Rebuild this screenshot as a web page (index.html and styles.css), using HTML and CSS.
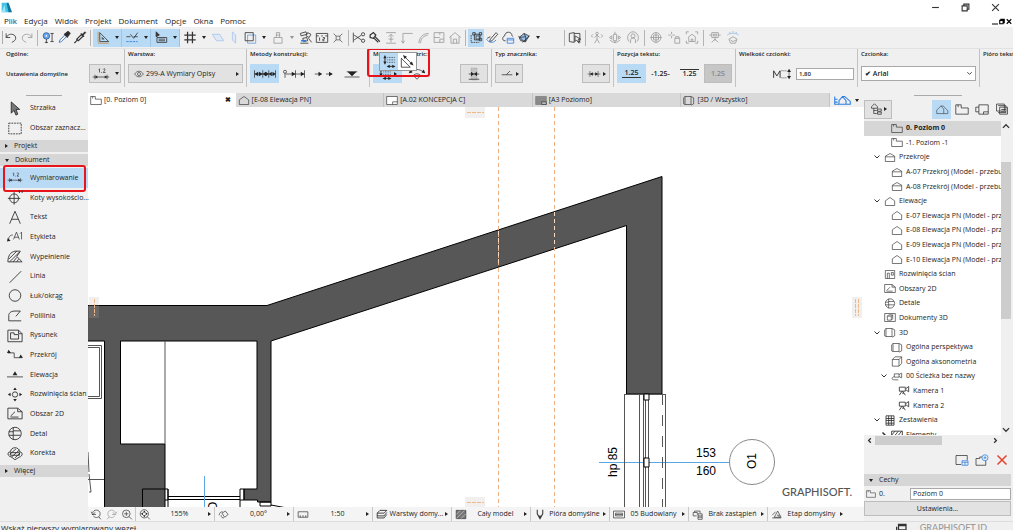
FILE: index.html
```html
<!DOCTYPE html>
<html lang="pl">
<head>
    <meta charset="UTF-8">
    <title>Poziom 0</title>
    <link rel="stylesheet" href="styles.css">
</head>
<body>
    <!-- shared icon shapes, all drawn on a 16px grid -->
    <svg class="symbols" aria-hidden="true">
        <symbol id="undo" viewBox="0 0 16 16"><path d="M2 3v5h5M2 8c3-5 8-5 11-2 2 4 0 6-4 8"/></symbol>
        <symbol id="redo" viewBox="0 0 16 16"><path d="M14 3v5H9M14 8c-3-5-8-5-11-2-2 4 0 6 4 8"/></symbol>
        <symbol id="find" viewBox="0 0 16 16"><circle cx="6" cy="6" r="4" fill="#6aa5e8" stroke="#2d5f9a"/><circle cx="6" cy="6" r="1" fill="#fff" stroke="none"/><path d="M6 10v5M4 14h4M11 3h4M13 3v10M11 13h4"/></symbol>
        <symbol id="dropper" viewBox="0 0 16 16"><path d="M2 14l1-3 6-6 2 2-6 6z" stroke="#2d6fc0"/><path d="M9 4l3 3 3-4-2-2z" fill="#223" stroke-width="2"/></symbol>
        <symbol id="syringe" viewBox="0 0 16 16"><path d="M1 15l4-4M4 10l6-6 2 2-6 6zM9 3l4 4" stroke-width="1.5"/><path d="M10 5l4-4 1 1-4 4z" fill="#223"/></symbol>
        <symbol id="setsquare" viewBox="0 0 16 16"><path d="M4 2v11h11zM7 8v2h2z"/><path d="M2 1v13M2 15h13" stroke="#c58a3c"/></symbol>
        <symbol id="guide" viewBox="0 0 16 16"><path d="M1 7h5M10 7h5M6 4l4 5 5-7"/><path d="M1 13h14" stroke="#2d7de0" stroke-dasharray="3 1"/></symbol>
        <symbol id="tracker" viewBox="0 0 16 16"><path d="M2 1v6l4-2z" fill="#333"/><path d="M3 8v6h12V8zM5 10h8M5 12h8"/></symbol>
        <symbol id="hash" viewBox="0 0 16 16"><path d="M5 1v14M11 1v14M1 5h14M1 11h14" stroke-width="1.5"/></symbol>
        <symbol id="planeh" viewBox="0 0 16 16"><path d="M1 4h9l5 8H6z" fill="#dfe9f8" stroke="#a9c3e8"/></symbol>
        <symbol id="planev" viewBox="0 0 16 16"><path d="M6 1l4 4v10l-4-4z" fill="#dfe9f8" stroke="#a9c3e8"/></symbol>
        <symbol id="frames" viewBox="0 0 16 16"><path d="M5 5h10v10H5z" stroke="#6a9be0"/><path d="M2 2h10v10H2z"/></symbol>
        <symbol id="lock" viewBox="0 0 16 16"><path d="M3 8h10v7H3zM6 8V5h4v3M6 5V2h4v3"/></symbol>
        <symbol id="groups" viewBox="0 0 16 16"><path d="M1 3l7-2 1 3-7 2zM10 2l4 2-2 4-4-2zM4 9l5-1 1 4-5 1zM1 15h10M11 9l4 5"/><path d="M2 12h6" stroke="#2d7de0" stroke-width="2"/></symbol>
        <symbol id="ruler12" viewBox="0 0 16 16"><path d="M1 3h14v11H1zM1 6h3M7 6h2M12 6h3M5 8v4M9 8h2v2H9v2h2"/></symbol>
        <symbol id="explode" viewBox="0 0 16 16"><path d="M5 5h6v6H5zM1 1l4 4M15 1l-4 4M1 15l4-4M15 15l-4-4"/></symbol>
        <symbol id="trim" viewBox="0 0 16 16"><path d="M1 2v12M2 5l9 6M2 11l9-6"/><circle cx="13" cy="4" r="2"/><circle cx="13" cy="12" r="2"/></symbol>
        <symbol id="wrench" viewBox="0 0 16 16"><path d="M2 5l4-3 3 3-3 4-4-1zM8 7l6 6M7 9l5 5" stroke-width="1.5"/></symbol>
        <symbol id="level" viewBox="0 0 16 16"><path d="M2 2h12M8 4v10M5 7l3-3 3 3M2 15h12M5 10h6"/></symbol>
        <symbol id="corner" viewBox="0 0 16 16"><path d="M3 15V3h12M1 12l2 3 2-3"/></symbol>
        <symbol id="arc" viewBox="0 0 16 16"><path d="M3 15C3 8 8 3 15 3M5 15c0-6 4-9 9-10"/></symbol>
        <symbol id="plan" viewBox="0 0 16 16"><path d="M2 2h12v12H2zM2 8h7M9 2v3M9 10v4M9 10h5"/></symbol>
        <symbol id="home" viewBox="0 0 16 16"><path d="M1 8l7-6 7 6M3 7v8h10V7M6 15v-5h4v5"/></symbol>
        <symbol id="marquee" viewBox="0 0 16 16"><path d="M6 4h7v7H6zM4 2h3v3H4zM12 2h3v3h-3zM12 9h3v3h-3z"/><path d="M2 5v9h10" stroke-dasharray="2 1"/><path d="M8 6h4v4H8z"/></symbol>
        <symbol id="pens" viewBox="0 0 16 16"><path d="M6 10l7-8 2 2-7 8-3 1z"/><path d="M1 10c3 4 8 6 12 1" stroke="#2d7de0"/><path d="M2 9l4-2"/></symbol>
        <symbol id="cloudwin" viewBox="0 0 16 16"><path d="M5 12H3c-3-2-1-6 1-6 0-6 9-6 9 0l1 1"/><path d="M7 9h8v6H7zM7 11h8" stroke="#2d7de0"/></symbol>
        <symbol id="cube" viewBox="0 0 16 16"><path d="M2 8l6-5 6 3-4 7-6-1z" fill="#9ac4f0"/><path d="M1 6l8 8M6 14l9-8M8 3l2 4-8 1M10 7v6"/></symbol>
        <symbol id="cursorwin" viewBox="0 0 16 16"><path d="M1 3l6-1v12l-6-1zM7 3h7v10h-3M8 6v7l2-2 3 4 1-1-2-4h3z"/></symbol>
        <symbol id="walk" viewBox="0 0 16 16"><circle cx="8" cy="3" r="1.5"/><path d="M8 5v5l-3 5M8 10l3 5M5 8l3-3 3 3M3 4l-2 2 2 2M13 4l2 2-2 2"/></symbol>
        <symbol id="orbit" viewBox="0 0 16 16"><path d="M6 4h4v8H6zM1 8l3-2v4zM15 8l-3-2v4zM8 1v3M8 12v3M2 11c3 4 9 4 12 0"/></symbol>
        <symbol id="headset" viewBox="0 0 16 16"><path d="M3 13C-1 8 3 1 8 1s9 7 5 12"/><circle cx="8" cy="6" r="2.500"/><path d="M5 15v-4c0-3 6-3 6 0v4"/></symbol>
        <symbol id="globe" viewBox="0 0 16 16"><circle cx="8" cy="8" r="6"/><path d="M5 5h6v6H5zM8 1v14M1 8h14"/></symbol>
        <symbol id="sparklock" viewBox="0 0 16 16"><path d="M5 1v3M5 6v3M1 5h3M6 5h3M9 9h6v6H9zM10 9V7h4v2"/></symbol>
        <symbol id="homeframe" viewBox="0 0 16 16"><path d="M1 4V1h3M12 1h3v3M15 12v3h-3M4 15H1v-3M3 8l5-4 5 4M4 8v5h8V8M7 13v-3h2v3"/></symbol>
        <symbol id="robot" viewBox="0 0 16 16"><path d="M4 2h8v6H4zM1 5h3M12 5h3M8 8v4M4 14l4-4 4 4M6 4h4v2H6z"/></symbol>
        <symbol id="sun" viewBox="0 0 16 16"><path d="M3 10l5-3 5 3-2 5H5zM5 11l3 2 4-2"/><path d="M1 5c4-3 10-3 14 0M4 1v2M8 0v2M12 1v2" stroke="#2d7de0"/></symbol>
        <symbol id="dim" viewBox="0 0 24 16"><path d="M1 12h22M4 9v6M20 9v6M9 2l1-1v5M12 6h1M15 2c1-2 3-1 2 1l-2 3h3"/><path d="M4 12l3-2v4zM20 12l-3-2v4z" fill="#222" stroke="none"/></symbol>
        <symbol id="eye" viewBox="0 0 16 16"><path d="M1 8c4-6 10-6 14 0-4 6-10 6-14 0z"/><circle cx="8" cy="8" r="2.500"/></symbol>
        <symbol id="chain" viewBox="0 0 32 16"><path d="M2 3v10M13 3v10M21 3v10M30 3v10M2 8h28"/><path d="M2 8l5-3v6zM13 8L8 5v6zM13 8l4-3v6zM21 8l-4-3v6zM21 8l4-3v6zM30 8l-4-3v6z" fill="#222" stroke="none"/></symbol>
        <symbol id="chainbase" viewBox="0 0 32 16"><circle cx="4" cy="5" r="2"/><path d="M4 7v6M5 8h25M18 3v10M30 3v10"/><path d="M18 8l-5-3v6zM30 8l-5-3v6z" fill="#222" stroke="none"/></symbol>
        <symbol id="arrows" viewBox="0 0 32 16"><path d="M5 8h8M20 8h8"/><path d="M15 8l-5-3v6zM29 8l-5-3v6z" fill="#222" stroke="none"/></symbol>
        <symbol id="elevdim" viewBox="0 0 24 16"><path d="M2 12h20M5 5h14"/><path d="M6 5h12l-6 6z" fill="#222" stroke="none"/></symbol>
        <symbol id="ortho" viewBox="0 0 16 16"><path d="M3 3v7M7 14h6M6 3h9M6 6h9M6 9h9" stroke-dasharray="1 1"/><path d="M3 3v7M7 14h6"/><path d="M3 0l2 4H1zM3 12l2-4H1zM5 14l4-2v4zM16 14l-4-2v4z" fill="#222" stroke="none"/></symbol>
        <symbol id="slant" viewBox="0 0 16 16"><path d="M1 4v11h11zM5 2l9 9"/><path d="M3 0l5 2-3 3zM16 13l-2-5-3 3z" fill="#222" stroke="none"/></symbol>
        <symbol id="arcdim" viewBox="0 0 24 16"><path d="M4 5c5-4 11-4 16 0M12 15L7 10M12 15l5-5M7 10c3-3 7-3 10 0"/><path d="M1 7l2-5 3 4zM23 7l-2-5-3 4z" fill="#222" stroke="none"/></symbol>
        <symbol id="walldim" viewBox="0 0 24 16"><path d="M8 0h8v16H8z" fill="#c4c4c4" stroke="#999" stroke-dasharray="1 1"/><path d="M5 8h14M5 15h14"/><path d="M8 5v6l4-3zM16 5v6l-4-3z" fill="#222" stroke="none"/></symbol>
        <symbol id="marker" viewBox="0 0 16 16"><path d="M1 9h14M7 9l5-5"/></symbol>
        <symbol id="cross" viewBox="0 0 24 16"><path d="M1 8h22M5 3v10M19 3v10"/><path d="M5 8l5-3v6zM19 8l-5-3v6z" fill="#222" stroke="none"/></symbol>
        <symbol id="msize" viewBox="0 0 28 16"><path d="M1 14V3l5 8 5-8v11" stroke-width="1.500"/><path d="M13 3h9M13 14h9" stroke-dasharray="2 1"/><path d="M25 3v11"/><path d="M25 0l3 5h-6zM25 16l3-5h-6z" fill="#222" stroke="none"/></symbol>
        <symbol id="story" viewBox="0 0 18 16"><path d="M1 14V2h7v4h9v8zM4 2v3"/></symbol>
        <symbol id="elev" viewBox="0 0 18 16"><path d="M2 14V7l7-5 7 5v7z"/></symbol>
        <symbol id="sect" viewBox="0 0 18 16"><path d="M2 14V6l7-4 7 4v8zM2 7h14"/></symbol>
        <symbol id="sheet" viewBox="0 0 18 16"><path d="M1 2h16v12H1z" fill="#fff"/><path d="M10 14v-4h7" /></symbol>
        <symbol id="master" viewBox="0 0 18 16"><path d="M1 2h16v12H1z" fill="#8a8a8a" stroke="#777"/><path d="M10 14v-4h7v4z" fill="#bbb"/></symbol>
        <symbol id="box" viewBox="0 0 18 16"><path d="M3 2h9v12H3zM12 2l4 2v9l-4 2M1 4l2-2M1 4v9l2 1"/></symbol>
        <symbol id="axo" viewBox="0 0 18 16"><path d="M2 5h10v10H2zM2 5l4-4h10v10l-4 4M12 5l4-4"/></symbol>
        <symbol id="houses" viewBox="0 0 24 16"><path d="M3 15V9l7-7 5 5v8zM10 2l4 0 8 8v5h-7"/></symbol>
        <symbol id="views" viewBox="0 0 24 16"><path d="M1 3v11h6M1 7h4M1 11h4M7 14V9l5-6 5 6v5zM12 3l3 0 8 7v4h-6" stroke="#2d7de0" stroke-width="1.500"/></symbol>
        <symbol id="ia" viewBox="0 0 18 16"><path d="M2 2h14v12H2zM5 14V6h3v8M11 5h3v4h-3z"/></symbol>
        <symbol id="worksheet" viewBox="0 0 18 16"><path d="M1 2h11l5 4v8H1zM12 2v4h5M4 11l5-5M4 12h9"/></symbol>
        <symbol id="detail" viewBox="0 0 18 16"><circle cx="9" cy="8" r="7"/><path d="M7 1v14M7 5h8M7 10h8M2 6h5M2 10h5"/></symbol>
        <symbol id="doc3d" viewBox="0 0 18 16"><path d="M1 2h16v12H1zM5 6h6v6H5zM5 6l2-2h6v6l-2 2M11 6l2-2"/></symbol>
        <symbol id="path" viewBox="0 0 18 16"><path d="M5 4h7v5H5zM12 5l4-2v7l-4-2M5 8c-5 2-4 5 0 5h6"/></symbol>
        <symbol id="camera" viewBox="0 0 18 16"><path d="M2 3h9v6H2zM12 5l4-3v8l-4-3M6 9l-4 6M7 9l4 6M6 12h3" stroke-width="1.300"/></symbol>
        <symbol id="table" viewBox="0 0 18 16"><path d="M3 1h12v14H3zM3 5h12M3 8h12M3 12h12M7 1v14M11 1v14" stroke-width="1.300"/></symbol>
        <symbol id="hatch" viewBox="0 0 18 16"><path d="M1 3h16v10H1zM1 9l5-6M3 13l8-10M8 13l8-10M13 13l4-5" stroke-width="1.300"/></symbol>
        <symbol id="layoutbook" viewBox="0 0 18 16"><path d="M5 2h12v12H5M5 2v12M5 5H1v6h4M11 14v-3h6"/></symbol>
        <symbol id="publisher" viewBox="0 0 18 16"><path d="M2 1h10v9H2zM4 3h10v9H4M6 5h10v9H6zM8 8h6M8 11h6"/></symbol>
        <symbol id="treemap" viewBox="0 0 16 16"><path d="M2 5l4-4 4 4v2H2zM5 7v7h4M5 10h4M10 8h5v3h-5zM10 12h5v3h-5z"/></symbol>
        <symbol id="arrow" viewBox="0 0 16 16"><path d="M4 1v12l3-3 2 5 2-1-2-5h4z" fill="#777"/></symbol>
        <symbol id="select" viewBox="0 0 18 16"><path d="M2 2h14v12H2z" stroke-dasharray="2 1"/></symbol>
        <symbol id="levelmark" viewBox="0 0 18 16"><circle cx="8" cy="9" r="5"/><path d="M8 2v14M1 9h14M13 1l1-1v3M17 0v3"/></symbol>
        <symbol id="label" viewBox="0 0 22 16"><path d="M2 12c1-5 3-6 6-6M9 12l4-10 4 10M10 9h6M18 4l2-2v10"/><path d="M0 15l1-5 4 4z" fill="#222" stroke="none"/></symbol>
        <symbol id="text" viewBox="0 0 18 16"><path d="M3 15L9 1l6 14M5 10h8"/></symbol>
        <symbol id="fill" viewBox="0 0 18 16"><path d="M1 14c0-7 3-11 8-12h6l-4 6 6 6zM2 11l9-9M3 14L14 3M7 14l4-5M11 14l2-3"/></symbol>
        <symbol id="line" viewBox="0 0 18 16"><path d="M3 15L16 2"/></symbol>
        <symbol id="circle" viewBox="0 0 18 16"><circle cx="9" cy="8" r="6.500"/></symbol>
        <symbol id="poly" viewBox="0 0 18 16"><path d="M16 14H2V8c0-4 4-5 7-5h6l-5 6"/></symbol>
        <symbol id="drawing" viewBox="0 0 18 16"><path d="M1 2h12l4 4v9H1zM4 12V5h4v2h5v5zM13 2v4h4"/></symbol>
        <symbol id="section" viewBox="0 0 20 16"><path d="M1 6h8v6h10"/><path d="M0 6l2-4 3 4zM15 12l2-4 3 4z" fill="#222" stroke="none"/></symbol>
        <symbol id="elevation" viewBox="0 0 20 16"><path d="M0 11h20"/><path d="M7 9l3-5 3 5z" fill="#222" stroke="none"/></symbol>
        <symbol id="interior" viewBox="0 0 18 16"><circle cx="9" cy="8" r="3"/><path d="M9 0l2 3H7zM9 16l2-3H7zM1 8l3-2v4zM17 8l-3-2v4z" fill="#222" stroke="none"/></symbol>
        <symbol id="change" viewBox="0 0 18 16"><path d="M5 12c-5-1-5-6-1-6 0-6 10-6 10 0 4 0 4 5 0 6l-5 3zM3 9l7-6M5 12l9-8M9 13l6-6M4 7h10v3H4z"/></symbol>
        <symbol id="zoomprev" viewBox="0 0 16 16"><path d="M3 6c1-6 11-6 11 1 0 6-7 7-10 3M12 11l3 4M1 4l2 4 4-3M2 8h6"/></symbol>
        <symbol id="zoomnext" viewBox="0 0 16 16"><path d="M13 6c-1-6-11-6-11 1 0 6 7 7 10 3M4 11l-3 4M15 4l-2 4-4-3M8 8h6"/></symbol>
        <symbol id="zoomin" viewBox="0 0 16 16"><circle cx="7" cy="7" r="5.500"/><path d="M11 11l4 4M4 7h6M7 4v6"/></symbol>
        <symbol id="zoomfit" viewBox="0 0 16 16"><circle cx="7" cy="7" r="6"/><path d="M11 11l4 4"/><path d="M7 2l2 3H5zM7 12l2-3H5zM2 7l3-2v4zM12 7L9 5v4z" fill="#222" stroke="none"/></symbol>
        <symbol id="rotate" viewBox="0 0 16 16"><path d="M5 6l5-3 4 5-5 4zM1 9c0-4 3-5 5-5M4 9c-1 3 2 4 4 4"/></symbol>
        <symbol id="scale" viewBox="0 0 16 16"><path d="M1 4h14v8H1zM4 12V9M8 12V9M12 12V9"/></symbol>
        <symbol id="layers" viewBox="0 0 16 16"><path d="M5 2h10l-4 4H1zM1 9l1 1h9l4-5M1 13h10l4-5M1 6v7" stroke-width="1.300"/></symbol>
        <symbol id="model" viewBox="0 0 16 16"><path d="M1 2h14v12H1z" fill="#777"/><path d="M1 8l6-6M1 14L13 2M8 14l7-7" stroke="#ccc"/></symbol>
        <symbol id="pen" viewBox="0 0 16 16"><path d="M4 1v6l4 7 4-7V1M8 9v5" stroke-width="1.500"/></symbol>
        <symbol id="mvo" viewBox="0 0 16 16"><path d="M0 3h16v10H0zM3 6h10v4H3zM3 8h10"/></symbol>
        <symbol id="override" viewBox="0 0 16 16"><path d="M6 10H1V5h6v3M3 5V3h8v3M8 7h6v8H8zM8 10h6M8 12h6"/></symbol>
        <symbol id="reno" viewBox="0 0 16 16"><path d="M1 13h13M4 12l5-9 5 9zM1 9l5-5M8 9h3v3"/></symbol>
        <symbol id="newview" viewBox="0 0 18 16"><path d="M8 14H1V2h15v6"/><path d="M9 9h8v6H9zM9 11h8M13 11v4" stroke="#2d7de0"/></symbol>
        <symbol id="clone" viewBox="0 0 18 16"><path d="M9 4H6v2H1v9h13V9"/><circle cx="13" cy="5" r="4" stroke="#2d7de0"/><path d="M13 3v4M11 5h4" stroke="#2d7de0"/></symbol>
        <symbol id="delete" viewBox="0 0 16 16"><path d="M2 2l12 12M14 2L2 14" stroke="#e5432d" stroke-width="2"/></symbol>
        <symbol id="down" viewBox="0 0 16 16"><path d="M3 5l5 5 5-5" stroke-width="2"/></symbol>
        <symbol id="up" viewBox="0 0 16 16"><path d="M3 11l5-5 5 5" stroke-width="2"/></symbol>
        <symbol id="left" viewBox="0 0 16 16"><path d="M11 3L6 8l5 5" stroke-width="3"/></symbol>
        <symbol id="right" viewBox="0 0 16 16"><path d="M5 3l5 5-5 5" stroke-width="3"/></symbol>
        <symbol id="min" viewBox="0 0 16 16"><path d="M2 8h12"/></symbol>
        <symbol id="restore" viewBox="0 0 16 16"><path d="M2 5h9v9H2zM5 5V2h9v9h-3"/></symbol>
        <symbol id="close" viewBox="0 0 16 16"><path d="M2 2l12 12M14 2L2 14"/></symbol>
        <symbol id="app" viewBox="0 0 16 16"><path d="M1 1h7l6 14H1z" fill="#3fc3e6" stroke="none"/><path d="M8 1h3l5 14h-5z" fill="#12759c" stroke="none"/><path d="M1 15L5 4l2 11z" fill="#9be4f5" stroke="none"/></symbol>
        <symbol id="windows" viewBox="0 0 18 16"><path d="M5 2h12v9H5zM5 4h12M2 6v9h12v-4" stroke-width="2"/></symbol>
    </svg>

    <header class="titlebar">
        <svg class="icon app-icon"><use href="#app"/></svg>
        <div class="window-buttons">
            <button aria-label="Minimalizuj"><svg class="icon small"><use href="#min"/></svg></button>
            <button aria-label="Przywróć"><svg class="icon small"><use href="#restore"/></svg></button>
            <button aria-label="Zamknij"><svg class="icon small"><use href="#close"/></svg></button>
        </div>
    </header>
    <nav class="menubar">
        <a href="#">Plik</a><a href="#">Edycja</a><a href="#">Widok</a><a href="#">Projekt</a><a href="#">Dokument</a><a href="#">Opcje</a><a href="#">Okna</a><a href="#">Pomoc</a>
        <div class="doc-buttons">
            <button aria-label="Minimalizuj okno"><svg class="icon tiny"><path d="M0 6h6"/></svg></button>
            <button aria-label="Przywróć okno"><svg class="icon tiny"><use href="#restore"/></svg></button>
            <button aria-label="Zamknij okno"><svg class="icon tiny"><use href="#close"/></svg></button>
        </div>
    </nav>

    <div class="toolbar">
        <span class="grip-v"></span>
        <button class="tool" aria-label="Cofnij"><svg class="icon"><use href="#undo"/></svg></button>
        <button class="tool off" aria-label="Ponów"><svg class="icon"><use href="#redo"/></svg></button>
        <span class="sep"></span>
        <button class="tool" aria-label="Znajdź"><svg class="icon"><use href="#find"/></svg></button>
        <button class="tool" aria-label="Pobierz parametry"><svg class="icon"><use href="#dropper"/></svg></button>
        <button class="tool" aria-label="Przekaż parametry"><svg class="icon"><use href="#syringe"/></svg></button>
        <span class="sep"></span>
        <div class="tool-group">
            <button class="tool" aria-label="Linie pomocnicze"><svg class="icon"><use href="#setsquare"/></svg></button><button class="caret-btn" aria-label="Więcej"><i class="caret-down"></i></button>
            <button class="tool" aria-label="Przyciąganie"><svg class="icon"><use href="#guide"/></svg></button><button class="caret-btn" aria-label="Więcej"><i class="caret-down"></i></button>
            <button class="tool" aria-label="Współrzędne"><svg class="icon"><use href="#tracker"/></svg></button><button class="caret-btn" aria-label="Więcej"><i class="caret-down"></i></button>
        </div>
        <button class="tool" aria-label="Siatka"><svg class="icon"><use href="#hash"/></svg></button>
        <button class="caret-btn" aria-label="Więcej"><i class="caret-down"></i></button>
        <button class="tool" aria-label="Płaszczyzna pozioma"><svg class="icon"><use href="#planeh"/></svg></button>
        <button class="tool" aria-label="Płaszczyzna pionowa"><svg class="icon"><use href="#planev"/></svg></button>
        <button class="tool" aria-label="Podkład"><svg class="icon"><use href="#frames"/></svg></button>
        <button class="caret-btn" aria-label="Więcej"><i class="caret-down"></i></button>
        <button class="tool off" aria-label="Blokada"><svg class="icon"><use href="#lock"/></svg></button>
        <button class="caret-btn off" aria-label="Więcej"><i class="caret-down"></i></button>
        <button class="tool" aria-label="Grupy"><svg class="icon"><use href="#groups"/></svg></button>
        <button class="tool" aria-label="Miara"><svg class="icon"><use href="#ruler12"/></svg></button>
        <button class="tool" aria-label="Rozbij"><svg class="icon small"><use href="#explode"/></svg></button>
        <span class="sep"></span>
        <button class="tool" aria-label="Utnij"><svg class="icon"><use href="#trim"/></svg></button>
        <button class="tool" aria-label="Dopasuj"><svg class="icon"><use href="#wrench"/></svg></button>
        <button class="tool off" aria-label="Poziom"><svg class="icon"><use href="#level"/></svg></button>
        <button class="tool off" aria-label="Narożnik"><svg class="icon"><use href="#corner"/></svg></button>
        <button class="tool off" aria-label="Zaokrąglenie"><svg class="icon"><use href="#arc"/></svg></button>
        <button class="tool off" aria-label="Rzut"><svg class="icon"><use href="#plan"/></svg></button>
        <button class="tool off" aria-label="Dach"><svg class="icon"><use href="#home"/></svg></button>
        <span class="sep"></span>
        <button class="tool on" aria-label="Zaznaczenie"><svg class="icon"><use href="#marquee"/></svg></button>
        <button class="tool" aria-label="Pisaki"><svg class="icon"><use href="#pens"/></svg></button>
        <button class="tool" aria-label="Chmura"><svg class="icon"><use href="#cloudwin"/></svg></button>
        <button class="tool" aria-label="Bryła"><svg class="icon"><use href="#cube"/></svg></button>
        <button class="caret-btn" aria-label="Więcej"><i class="caret-down"></i></button>
        <span class="toolbar-gap"></span>
        <span class="sep"></span>
        <button class="tool" aria-label="Okno 3D"><svg class="icon"><use href="#cursorwin"/></svg></button>
        <span class="sep"></span>
        <button class="tool wide off" aria-label="Spacer"><svg class="icon"><use href="#walk"/></svg></button>
        <button class="tool wide off" aria-label="Orbita"><svg class="icon"><use href="#orbit"/></svg></button>
        <button class="tool wide off" aria-label="Eksploruj"><svg class="icon"><use href="#headset"/></svg></button>
        <span class="sep"></span>
        <button class="tool wide off" aria-label="Cel"><svg class="icon"><use href="#globe"/></svg></button>
        <button class="tool wide off" aria-label="Blokada widoku"><svg class="icon"><use href="#sparklock"/></svg></button>
        <button class="tool wide off" aria-label="Dopasuj widok"><svg class="icon"><use href="#homeframe"/></svg></button>
        <span class="sep"></span>
        <button class="tool wide off" aria-label="Kamera"><svg class="icon"><use href="#robot"/></svg></button>
        <button class="tool wide off" aria-label="Słońce"><svg class="icon"><use href="#sun"/></svg></button>
    </div>

    <div class="infobox">
        <section class="info first">
            <h2>Ogólne:</h2>
            <div class="info-row"><span>Ustawienia domyślne</span>
                <button class="box push split" aria-label="Wymiarowanie"><svg class="icon mid"><use href="#dim"/></svg><i class="caret-down"></i></button></div>
        </section>
        <section class="info">
            <h2>Warstwa:</h2>
            <div class="info-row"><button class="box layer"><svg class="icon small"><use href="#eye"/></svg>299-A Wymiary Opisy<i class="caret-right"></i></button></div>
        </section>
        <section class="info">
            <h2>Metody konstrukcji:</h2>
            <div class="info-row">
                <button class="box plain on" aria-label="Łańcuch"><svg class="icon long"><use href="#chain"/></svg></button>
                <button class="box plain" aria-label="Od bazy"><svg class="icon long"><use href="#chainbase"/></svg></button>
                <button class="box plain" aria-label="Strzałki"><svg class="icon long"><use href="#arrows"/></svg></button>
                <button class="box plain" aria-label="Rzędna"><svg class="icon mid"><use href="#elevdim"/></svg></button>
            </div>
        </section>
        <section class="info">
            <h2>Metoda geometric:</h2>
            <div class="info-row">
                <button class="box plain on" aria-label="Poziomo i pionowo"><svg class="icon"><use href="#ortho"/></svg><i class="caret-right"></i></button>
                <button class="box plain" aria-label="Łuk"><svg class="icon mid"><use href="#arcdim"/></svg></button>
                <button class="box push" aria-label="Ściana"><svg class="icon mid"><use href="#walldim"/></svg></button>
            </div>
            <div class="flyout">
                <button class="on" aria-label="Ortogonalnie"><svg class="icon"><use href="#ortho"/></svg></button>
                <button aria-label="Dowolny kąt"><svg class="icon"><use href="#slant"/></svg></button>
            </div>
            <div class="highlight"></div>
        </section>
        <section class="info">
            <h2>Typ znacznika:</h2>
            <div class="info-row">
                <button class="box" aria-label="Znacznik"><svg class="icon cross"><use href="#marker"/></svg><i class="caret-right"></i></button>
                <button class="box push" aria-label="Grot"><svg class="icon cross"><use href="#cross"/></svg><i class="caret-right"></i></button>
            </div>
        </section>
        <section class="info">
            <h2>Pozycja tekstu:</h2>
            <div class="info-row">
                <button class="box plain on"><span class="num under">1.25</span></button>
                <button class="box plain"><span class="num">-1.25-</span></button>
                <button class="box plain"><span class="num over">1.25</span></button>
                <button class="box dim"><span class="num">1.25</span></button>
            </div>
        </section>
        <section class="info">
            <h2><label for="size">Wielkość czcionki:</label></h2>
            <div class="info-row"><svg class="icon push msize"><use href="#msize"/></svg><input id="size" type="text" value="1,80"></div>
        </section>
        <section class="info">
            <h2><label for="font">Czcionka:</label></h2>
            <div class="info-row font-row"><select id="font"><option>✔ Arial</option></select><svg class="icon tiny"><use href="#down"/></svg></div>
        </section>
        <section class="info last"><h2>Pióro tekstu:</h2></section>
    </div>

    <main>
        <aside class="palette">
            <span class="grip-h"></span>
            <ul class="pick">
                <li><button><svg class="icon"><use href="#arrow"/></svg>Strzałka</button></li>
                <li><button><svg class="icon"><use href="#select"/></svg>Obszar zaznacz...</button></li>
            </ul>
            <button class="group-head"><i class="caret-right"></i>Projekt</button>
            <button class="group-head"><i class="caret-down"></i>Dokument</button>
            <ul class="tools">
                <li class="selected"><button><svg class="icon"><use href="#dim"/></svg>Wymiarowanie</button><div class="highlight"></div></li>
                <li><button><svg class="icon"><use href="#levelmark"/></svg>Koty wysokościo...</button></li>
                <li><button><svg class="icon"><use href="#text"/></svg>Tekst</button></li>
                <li><button><svg class="icon"><use href="#label"/></svg>Etykieta</button></li>
                <li><button><svg class="icon"><use href="#fill"/></svg>Wypełnienie</button></li>
                <li><button><svg class="icon"><use href="#line"/></svg>Linia</button></li>
                <li><button><svg class="icon"><use href="#circle"/></svg>Łuk/okrąg</button></li>
                <li><button><svg class="icon"><use href="#poly"/></svg>Polilinia</button></li>
                <li><button><svg class="icon"><use href="#drawing"/></svg>Rysunek</button></li>
                <li><button><svg class="icon"><use href="#section"/></svg>Przekrój</button></li>
                <li><button><svg class="icon"><use href="#elevation"/></svg>Elewacja</button></li>
                <li><button><svg class="icon"><use href="#interior"/></svg>Rozwinięcia ścian</button></li>
                <li><button><svg class="icon"><use href="#worksheet"/></svg>Obszar 2D</button></li>
                <li><button><svg class="icon"><use href="#detail"/></svg>Detal</button></li>
                <li><button><svg class="icon"><use href="#change"/></svg>Korekta</button></li>
            </ul>
            <button class="group-head more"><i class="caret-right"></i>Więcej</button>
        </aside>

        <div class="workspace">
            <div class="tabs">
                <a href="#" class="tab active"><svg class="icon"><use href="#story"/></svg>[0. Poziom 0]<b>✖</b></a>
                <a href="#" class="tab"><svg class="icon"><use href="#elev"/></svg>[E-08 Elewacja PN]</a>
                <a href="#" class="tab"><svg class="icon"><use href="#sheet"/></svg>[A.02 KONCEPCJA C]</a>
                <a href="#" class="tab"><svg class="icon"><use href="#master"/></svg>[A3 Poziomo]</a>
                <a href="#" class="tab"><svg class="icon"><use href="#box"/></svg>[3D / Wszystko]</a>
                <button class="tab-views" aria-label="Widoki"><svg class="icon"><use href="#views"/></svg><i class="caret-down"></i></button>
            </div>
            <!-- floor plan -->
            <svg class="plan" viewBox="88 107 776 400" preserveAspectRatio="xMidYMid slice">
                <path class="wall" d="M80 305.500H267L662 176.500V394H626.500V225.500L271 341V502H257.500V500H244V489H257V341H120.500V444H165V510H104.500V341H80z"/>
                <path class="ink" d="M142.500 510V489H168V500H165M168 489V510M168 496.500H240M168 499.500H240M240 489h4v11h-4zM240 500V510M260 502h11v4h-11zM271 505l16 3"/>
                <path class="ink thin" d="M165 341V444M80 345.500H101.500V398.500H80M80 347.500H99.500V396.500H80M80 479.500H104M88 452l1 20M89 474l2 18h-2"/>
                <path class="cyan" d="M204.500 476V510M599 462.500H730"/>
                <g class="ink thin">
                    <path d="M624.500 394V510M639.500 394V510M643.500 394V510M645.500 394V510M648.500 394V510M665.500 394V510M624 394.500H666"/>
                    <path d="M662.500 394V510" stroke-dasharray="11 10"/>
                    <path class="strong" d="M644 394h5v6h-5zM644 458h5v9h-5z"/>
                </g>
                <path class="axis" d="M498.500 107V510M554.500 107V510"/>
                <path class="axis on-wall" d="M498.500 231V266M554.500 212V248"/>
                <g class="stub">
                    <path d="M465 107h20v11h-20zM465 497h20v11h-20zM89 297h10v21H89zM852 297h10v21h-10z"/>
                    <path class="mark" d="M467 112.500h17M467 502.500h17M94.500 299v17M855.500 299v17M858.500 299v17"/>
                </g>
                <circle class="bubble" cx="752" cy="462" r="22.500"/>
                <g class="plan-text">
                    <text x="696" y="457">153</text>
                    <text x="696" y="475">160</text>
                    <text transform="translate(617 477) rotate(-90)">hp 85</text>
                    <text transform="translate(756 469) rotate(-90)">O1</text>
                    <text transform="translate(217 511) rotate(-90)">O</text>
                </g>
                <text class="brand" x="782" y="496">GRAPHISOFT.</text>
            </svg>
            <div class="quickbar">
                <div class="zooms">
                    <button aria-label="Poprzednie"><svg class="icon"><use href="#zoomprev"/></svg></button>
                    <button class="off" aria-label="Następne"><svg class="icon"><use href="#zoomnext"/></svg></button>
                    <button aria-label="Powiększ"><svg class="icon"><use href="#zoomin"/></svg></button>
                </div>
                <button class="quick"><svg class="icon"><use href="#zoomfit"/></svg><span>155%</span><i class="caret-right"></i></button>
                <button class="quick"><svg class="icon"><use href="#rotate"/></svg><span>0,00°</span><i class="caret-right"></i></button>
                <button class="quick"><svg class="icon"><use href="#scale"/></svg><span>1:50</span><i class="caret-right"></i></button>
                <button class="quick"><svg class="icon"><use href="#layers"/></svg><span>Warstwy domy...</span><i class="caret-right"></i></button>
                <button class="quick"><svg class="icon"><use href="#model"/></svg><span>Cały model</span><i class="caret-right"></i></button>
                <button class="quick"><svg class="icon"><use href="#pen"/></svg><span>Pióra domyślne</span><i class="caret-right"></i></button>
                <button class="quick"><svg class="icon"><use href="#mvo"/></svg><span>05 Budowlany</span><i class="caret-right"></i></button>
                <button class="quick"><svg class="icon"><use href="#override"/></svg><span>Brak zastąpień</span><i class="caret-right"></i></button>
                <button class="quick"><svg class="icon"><use href="#reno"/></svg><span>Etap domyślny</span><i class="caret-right"></i></button>
            </div>
        </div>

        <aside class="navigator">
            <span class="grip-h"></span>
            <div class="nav-head">
                <button class="box" aria-label="Projekt"><svg class="icon"><use href="#treemap"/></svg><i class="caret-right"></i></button>
                <div class="nav-tabs">
                    <button class="on" aria-label="Mapa projektu"><svg class="icon"><use href="#houses"/></svg></button>
                    <button aria-label="Mapa widoków"><svg class="icon"><use href="#story"/></svg></button>
                    <button aria-label="Teczka arkuszy"><svg class="icon"><use href="#layoutbook"/></svg></button>
                    <button aria-label="Wydawca"><svg class="icon"><use href="#publisher"/></svg></button>
                </div>
            </div>
            <div class="tree-area">
                <div class="tree-view">
                    <ul class="tree">
                        <li class="l1 current"><svg class="icon"><use href="#story"/></svg>0. Poziom 0</li>
                        <li class="l1"><svg class="icon"><use href="#story"/></svg>-1. Poziom -1</li>
                        <li class="l0 open"><svg class="icon chev"><use href="#down"/></svg><svg class="icon"><use href="#sect"/></svg>Przekroje</li>
                        <li class="l1"><svg class="icon"><use href="#sect"/></svg>A-07 Przekrój (Model - przebudowa)</li>
                        <li class="l1"><svg class="icon"><use href="#sect"/></svg>A-08 Przekrój (Model - przebudowa)</li>
                        <li class="l0 open"><svg class="icon chev"><use href="#down"/></svg><svg class="icon"><use href="#elev"/></svg>Elewacje</li>
                        <li class="l1"><svg class="icon"><use href="#elev"/></svg>E-07 Elewacja PN (Model - przebudowa)</li>
                        <li class="l1"><svg class="icon"><use href="#elev"/></svg>E-08 Elewacja PN (Model - przebudowa)</li>
                        <li class="l1"><svg class="icon"><use href="#elev"/></svg>E-09 Elewacja PN (Model - przebudowa)</li>
                        <li class="l1"><svg class="icon"><use href="#elev"/></svg>E-10 Elewacja PN (Model - przebudowa)</li>
                        <li class="l0"><svg class="icon"><use href="#ia"/></svg>Rozwinięcia ścian</li>
                        <li class="l0"><svg class="icon"><use href="#worksheet"/></svg>Obszary 2D</li>
                        <li class="l0"><svg class="icon"><use href="#detail"/></svg>Detale</li>
                        <li class="l0"><svg class="icon"><use href="#doc3d"/></svg>Dokumenty 3D</li>
                        <li class="l0 open"><svg class="icon chev"><use href="#down"/></svg><svg class="icon"><use href="#box"/></svg>3D</li>
                        <li class="l1"><svg class="icon"><use href="#box"/></svg>Ogólna perspektywa</li>
                        <li class="l1"><svg class="icon"><use href="#axo"/></svg>Ogólna aksonometria</li>
                        <li class="l1 open"><svg class="icon chev"><use href="#down"/></svg><svg class="icon"><use href="#path"/></svg>00 Ścieżka bez nazwy</li>
                        <li class="l2"><svg class="icon"><use href="#camera"/></svg>Kamera 1</li>
                        <li class="l2"><svg class="icon"><use href="#camera"/></svg>Kamera 2</li>
                        <li class="l0 open"><svg class="icon chev"><use href="#down"/></svg><svg class="icon"><use href="#table"/></svg>Zestawienia</li>
                        <li class="l1 open"><svg class="icon chev"><use href="#right"/></svg><svg class="icon"><use href="#hatch"/></svg>Elementy</li>
                    </ul>
                </div>
                <div class="vscroll"><svg class="icon small"><use href="#up"/></svg><span class="thumb"></span><svg class="icon small"><use href="#down"/></svg></div>
            </div>
            <div class="hscroll"><svg class="icon tiny"><use href="#left"/></svg><span class="thumb"></span><svg class="icon tiny"><use href="#right"/></svg></div>
            <div class="nav-actions">
                <button aria-label="Nowy widok"><svg class="icon"><use href="#newview"/></svg></button>
                <button aria-label="Klonuj"><svg class="icon"><use href="#clone"/></svg></button>
                <button aria-label="Usuń"><svg class="icon"><use href="#delete"/></svg></button>
            </div>
            <button class="group-head"><i class="caret-down"></i>Cechy</button>
            <div class="prop-row"><svg class="icon small"><use href="#story"/></svg><label for="story-name">0.</label><input id="story-name" type="text" value="Poziom 0"></div>
            <button class="box settings">Ustawienia...</button>
        </aside>
    </main>

    <footer class="status">
        <span>Wskaż pierwszy wymiarowany węzeł</span>
        <div class="account"><svg class="icon"><use href="#windows"/></svg><span>GRAPHISOFT ID</span></div>
    </footer>
</body>
</html>
```
FILE: styles.css
```css
* {
    box-sizing: border-box;
}

body {
    margin: 0;
    height: 100vh;
    display: flex;
    flex-direction: column;
    overflow: hidden;
    background-color: #f0f0f0;
    color: #222;
    font-family: "Open Sans", "Noto Sans", sans-serif;
    font-size: 7px;
    font-weight: 500;
    line-height: 10px;
}

button {
    margin: 0;
    padding: 0;
    border: none;
    background: none;
    color: inherit;
    font: inherit;
    display: flex;
    align-items: center;
    justify-content: center;
}

a {
    color: inherit;
    text-decoration: none;
}

ul {
    list-style: none;
    margin: 0;
    padding: 0;
}

input, select {
    border: 1px solid #a8a8a8;
    border-radius: 0;
    background-color: white;
    color: inherit;
    font: inherit;
    padding: 0 2px;
    height: 12px;
    min-width: 0;
}

.symbols {
    display: none;
}

/* Icons */
.icon {
    width: 14px;
    height: 13px;
    flex: none;
    fill: none;
    stroke: #333;
    stroke-width: 1;
}

.icon.small {
    width: 10px;
    height: 10px;
}

.icon.tiny {
    width: 7px;
    height: 7px;
}

.icon.mid {
    width: 18px;
    height: 14px;
}

.icon.long {
    width: 24px;
    height: 12px;
}

.icon.cross {
    width: 14px;
    height: 12px;
}

.caret-down {
    border-left: 2px solid transparent;
    border-right: 2px solid transparent;
    border-top: 3px solid #222;
}

.caret-right {
    border-top: 2px solid transparent;
    border-bottom: 2px solid transparent;
    border-left: 3px solid #222;
}

.off {
    opacity: 0.45;
}

.on {
    background-color: #b9daf5;
}

.push {
    margin-left: auto;
}

.highlight {
    position: absolute;
    border: 2px solid #e8141c;
    border-radius: 3px;
    pointer-events: none;
}

/* Title and menu */
.titlebar {
    height: 15px;
    flex: none;
    display: flex;
    justify-content: space-between;
    align-items: center;
    padding: 0 13px 0 1px;
    background-color: white;
}

.titlebar .app-icon {
    width: 11px;
    height: 11px;
}

.window-buttons {
    display: flex;
    gap: 21px;
}

.window-buttons .icon {
    width: 9px;
    height: 9px;
    stroke-width: 2;
}

.menubar {
    height: 12px;
    flex: none;
    display: flex;
    align-items: center;
    gap: 7px;
    padding: 0 1px 0 4px;
    background-color: white;
    font-size: 8px;
}

.doc-buttons {
    display: flex;
    gap: 1px;
    margin-left: auto;
}

.doc-buttons .icon {
    stroke: black;
    stroke-width: 3;
    width: 6px;
}

.doc-buttons button:first-child .icon {
    stroke-width: 1;
}

/* Toolbar */
.toolbar {
    height: 21px;
    flex: none;
    display: flex;
    align-items: center;
    padding-left: 2px;
}

.grip-v {
    width: 1px;
    height: 13px;
    background-color: #aaa;
}

.tool {
    width: 16px;
    height: 18px;
    flex: none;
}

.tool.wide {
    width: 18px;
}

.caret-btn {
    width: 12px;
    height: 18px;
    flex: none;
}

.sep {
    width: 1px;
    height: 16px;
    margin: 0 2px;
    background-color: #b4b4b4;
}

.tool-group {
    display: flex;
    margin-right: 2px;
    background-color: #b9daf5;
}

.tool-group .tool {
    width: 19px;
}

.tool-group .caret-btn {
    width: 10px;
    border-right: 1px solid #9cc4e4;
}

.toolbar-gap {
    width: 18px;
}

/* Info box */
.infobox {
    height: 44px;
    flex: none;
    display: flex;
    padding: 0 0 5px 2px;
    border-top: 1px solid #e2e2e2;
    overflow: hidden;
}

.info {
    flex: 0 0 122px;
    position: relative;
    padding: 0 3px;
    border-left: 1px solid #c2c2c2;
}

.info.first {
    border-left-color: transparent;
}

.info h2 {
    margin: 0;
    font-size: 6px;
    line-height: 10px;
    font-weight: 600;
    white-space: nowrap;
}

.info-row {
    height: 19px;
    margin-top: 5px;
    display: flex;
    align-items: center;
    white-space: nowrap;
    font-size: 6px;
    font-weight: 600;
}

.box {
    width: 28px;
    height: 19px;
    gap: 2px;
    flex: none;
    border: 1px solid #bdbdbd;
    background-color: #e2e2e2;
}

.box.split {
    width: 32px;
    gap: 5px;
}

.box.layer {
    width: 100%;
    padding: 0 3px 0 5px;
    justify-content: flex-start;
    font-size: 7px;
    font-weight: 500;
}

.layer .caret-right {
    margin-left: auto;
}

.box.plain {
    width: 29px;
    border-color: transparent;
    background-color: transparent;
}

.box.on {
    background-color: #b9daf5;
}

.box.dim {
    background-color: #c6c6c6;
    color: #888;
}

.num {
    font-size: 7px;
    line-height: 8px;
}

.under {
    border-bottom: 1px solid #333;
    padding: 0 3px;
}

.over {
    border-top: 1px solid #333;
    padding: 0 3px;
}

.icon.msize {
    width: 18px;
    height: 12px;
    margin-right: 5px;
}

#size {
    width: 58px;
}

.font-row {
    position: relative;
}

.font-row select {
    width: 100%;
    height: 15px;
    appearance: none;
    padding: 0 3px;
    font-size: 7px;
}

.font-row .icon {
    position: absolute;
    right: 3px;
    pointer-events: none;
}

.flyout {
    position: absolute;
    z-index: 1;
    top: 3px;
    left: 9px;
    display: flex;
    border: 1px solid #999;
    background-color: white;
}

.flyout button {
    width: 18px;
    height: 17px;
}

.info .highlight {
    z-index: 2;
    top: -1px;
    left: -3px;
    width: 63px;
    height: 29px;
}

/* Main area */
main {
    flex: 1;
    min-height: 0;
    display: flex;
}

.grip-h {
    display: block;
    width: 36px;
    height: 1px;
    margin: 3px auto 1px;
    flex: none;
    background-color: #aaa;
}

.group-head {
    width: 100%;
    height: 12px;
    flex: none;
    justify-content: flex-start;
    gap: 6px;
    padding-left: 5px;
    background-color: #d6d6d6;
}

.palette {
    width: 88px;
    flex: none;
    display: flex;
    flex-direction: column;
    gap: 2px;
    padding-bottom: 44px;
}

.palette .grip-h {
    margin-bottom: 0;
}

.palette li {
    position: relative;
    display: flex;
}

.pick li {
    height: 20px;
}

.palette li button {
    flex: 1;
    justify-content: flex-start;
    gap: 7px;
    padding-left: 7px;
    white-space: nowrap;
}

.palette li .icon {
    width: 16px;
    height: 15px;
}

.tools {
    flex: 1;
    min-height: 0;
    display: flex;
    flex-direction: column;
}

.tools li {
    flex: 1;
    min-height: 0;
}

.selected {
    background-color: #b9daf5;
}

.selected .highlight {
    top: -3px;
    right: 2px;
    bottom: -4px;
    left: 3px;
}

.workspace {
    flex: 1;
    min-width: 0;
    display: flex;
    flex-direction: column;
    padding-top: 1px;
    background-color: #f0f0f0;
}

.tabs {
    height: 14px;
    flex: none;
    display: flex;
}

.tab {
    flex: 1;
    display: flex;
    align-items: center;
    gap: 2px;
    padding: 0 5px 0 2px;
    border-right: 1px solid #c4c4c4;
    background-color: #d9d9d9;
}

.tab .icon {
    width: 12px;
    height: 11px;
}

.tab.active {
    background-color: white;
    border-right: none;
}

.tab b {
    margin-left: auto;
}

.tab-views {
    width: 34px;
    gap: 4px;
}

.tab-views .icon {
    width: 17px;
    height: 12px;
}

.plan {
    flex: 1;
    min-height: 0;
    width: 100%;
    background-color: white;
    fill: none;
}

.wall {
    fill: #575757;
    stroke: black;
    stroke-width: 1;
}

.ink {
    stroke: black;
    stroke-width: 1;
}

.thin {
    stroke: #555;
}

.strong {
    fill: white;
    stroke: black;
}

.cyan {
    stroke: #5aa7e4;
}

.axis {
    stroke: #eeb083;
    stroke-dasharray: 4 3;
}

.on-wall {
    stroke: #f5d9c2;
}

.stub {
    fill: rgba(190, 180, 170, 0.2);
}

.mark {
    stroke: #efb98a;
    stroke-dasharray: 4 1;
}

.bubble {
    stroke: #888;
}

.plan-text {
    fill: black;
    font-family: "Liberation Sans", Arial, sans-serif;
    font-size: 12px;
}

.brand {
    fill: #555;
    font-family: Lato, sans-serif;
    font-size: 11px;
}

/* Bar below the plan */
.quickbar {
    height: 14px;
    flex: none;
    display: flex;
    background-color: #f4f4f4;
}

.quickbar .icon {
    width: 12px;
    height: 11px;
}

.zooms {
    width: 47px;
    display: flex;
}

.zooms button {
    flex: 1;
}

.quick {
    width: 79px;
    padding: 0 3px;
    border-left: 1px solid #c8c8c8;
    white-space: nowrap;
}

.quick span {
    flex: 1;
    text-align: center;
}

/* Navigator */
.navigator {
    width: 149px;
    flex: none;
    display: flex;
    flex-direction: column;
    padding-right: 2px;
}

.navigator .grip-h {
    width: 48px;
}

.nav-head {
    height: 24px;
    flex: none;
    display: flex;
    justify-content: space-between;
    align-items: center;
}

.nav-head .box .icon {
    width: 12px;
    height: 12px;
}

.nav-tabs {
    display: flex;
    gap: 1px;
}

.nav-tabs button {
    width: 19px;
    height: 19px;
}

.tree-area {
    flex: 1;
    min-height: 0;
    display: flex;
}

.tree-view {
    flex: 1;
    min-width: 0;
    overflow: hidden;
    background-color: white;
}

/* the last row runs under the horizontal scroll bar */
.tree {
    height: calc(100% + 7px);
    display: grid;
    grid-auto-rows: 1fr;
}

.tree li {
    min-height: 0;
    display: flex;
    align-items: center;
    gap: 3px;
    white-space: nowrap;
}

.tree .icon {
    width: 12px;
    height: 11px;
}

.tree .chev {
    width: 8px;
    height: 8px;
}

.l0 {
    padding-left: 20px;
}

.l1 {
    padding-left: 27px;
}

.l2 {
    padding-left: 34px;
}

.l0.open {
    padding-left: 9px;
}

.l1.open {
    padding-left: 16px;
}

.current {
    background-color: #d6d6d6;
    font-weight: bold;
}

.vscroll {
    width: 10px;
    display: flex;
    flex-direction: column;
    align-items: center;
}

.vscroll .thumb {
    width: 10px;
    height: 50%;
    margin: 31px 0 auto;
    background-color: #cdcdcd;
}

.hscroll {
    height: 11px;
    width: 137px;
    flex: none;
    display: flex;
    align-items: center;
    padding: 0 2px;
}

.hscroll .thumb {
    width: 50%;
    height: 9px;
    margin: 0 auto 0 2px;
    background-color: #cdcdcd;
}

.nav-actions {
    height: 28px;
    flex: none;
    display: flex;
    justify-content: flex-end;
    align-items: center;
    gap: 6px;
    padding-right: 2px;
}

.nav-actions .icon {
    height: 12px;
}

.prop-row {
    height: 15px;
    flex: none;
    display: flex;
    align-items: center;
    gap: 3px;
    padding-left: 2px;
}

.prop-row input {
    width: 101px;
    margin-left: auto;
}

.settings {
    width: 147px;
    height: 15px;
    margin-bottom: 5px;
}

/* Status line */
.status {
    height: 9px;
    flex: none;
    display: flex;
    justify-content: space-between;
    padding: 1px 26px 0 1px;
    border-top: 1px solid #ddd;
    overflow: hidden;
    font-size: 8px;
}

.account {
    display: flex;
    gap: 13px;
    color: #999;
    font-family: Lato, sans-serif;
    font-size: 9px;
}

.account .icon {
    width: 12px;
    height: 10px;
}
```
